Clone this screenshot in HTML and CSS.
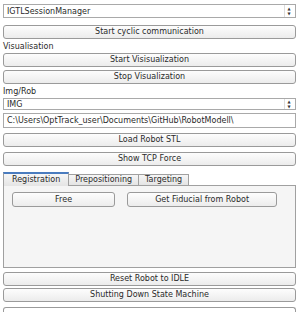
FILE: index.html
```html
<!DOCTYPE html>
<html lang="en">

<head>
    <meta charset="UTF-8">
    <title>Session Manager</title>
    <link rel="stylesheet" href="styles.css">
</head>

<body>
    <div class="panel">
        <div class="combo first">
            <span>IGTLSessionManager</span>
            <span class="spin">&#9650;<br>&#9660;</span>
        </div>
        <a class="btn gap7" href="javascript:;">Start cyclic communication</a>
        <div class="label">Visualisation</div>
        <a class="btn" href="javascript:;">Start Visisualization</a>
        <a class="btn gap3" href="javascript:;">Stop Visualization</a>
        <div class="label">Img/Rob</div>
        <div class="combo">
            <span>IMG</span>
            <span class="spin">&#9650;<br>&#9660;</span>
        </div>
        <div class="edit gap3">C:\Users\OptTrack_user\Documents\GitHub\RobotModell\</div>
        <a class="btn gap5" href="javascript:;">Load Robot STL</a>
        <a class="btn gap5" href="javascript:;">Show TCP Force</a>

        <div class="tabs">
            <div class="tab-bar">
                <span class="tab active">Registration</span>
                <span class="tab">Prepositioning</span>
                <span class="tab">Targeting</span>
            </div>
            <div class="tab-pane">
                <a class="btn free" href="javascript:;">Free</a>
                <a class="btn fiducial" href="javascript:;">Get Fiducial from Robot</a>
            </div>
        </div>

        <a class="btn gap4" href="javascript:;">Reset Robot to IDLE</a>
        <a class="btn gap2" href="javascript:;">Shutting Down State Machine</a>
        <div class="cut"></div>
    </div>
</body>

</html>
```

FILE: styles.css
```css
* {
    margin: 0;
    padding: 0;
    box-sizing: border-box;
}

body {
    background-color: #fff;
    font-family: "DejaVu Sans", "Liberation Sans", sans-serif;
    font-size: 8px;
    color: #2a2a2a;
}

a {
    text-decoration: none;
    color: #2a2a2a;
}

.panel {
    display: flex;
    flex-direction: column;
    padding: 0 4px 0 3px;
}

.combo {
    display: flex;
    justify-content: space-between;
    align-items: center;
    height: 12px;
    padding-left: 3px;
    border: 1px solid #a9a9a9;
    background-color: #fff;
}

.combo.first {
    margin-top: 4px;
    height: 14px;
}

.combo .spin {
    width: 9px;
    height: 100%;
    font-size: 4px;
    line-height: 5px;
    text-align: center;
    padding-top: 0;
    margin-right: 2px;
    border-left: 1px solid #ddd;
    color: #333;
}

.combo.first .spin {
    padding-top: 1px;
}

.btn {
    display: block;
    height: 14px;
    line-height: 12px;
    text-align: center;
    border: 1px solid #9a9a9a;
    border-radius: 3px;
    background: linear-gradient(#fdfdfd, #ececec);
}

.gap2 { margin-top: 2px; }
.gap3 { margin-top: 3px; }
.gap4 { margin-top: 4px; }
.gap5 { margin-top: 5px; }
.gap7 { margin-top: 7px; }

.label {
    height: 14px;
    line-height: 15px;
}

.edit {
    height: 15px;
    line-height: 13px;
    padding-left: 3px;
    border: 1px solid #a9a9a9;
    background-color: #fff;
    white-space: nowrap;
    overflow: hidden;
}

.tabs {
    margin-top: 6px;
}

.tab-bar {
    display: flex;
    align-items: flex-end;
    height: 13px;
}

.tab {
    height: 11px;
    line-height: 10px;
    padding: 0 6px;
    border: 1px solid #a0a0a0;
    border-bottom: none;
    background: linear-gradient(#f6f6f6, #e4e4e4);
    margin-left: -1px;
}

.tab.active {
    height: 14px;
    line-height: 12px;
    margin-left: 0;
    padding: 0 8px;
    background-color: #fafafa;
    border-top: 2px solid #4a7cbf;
    border-color: #a0a0a0;
    border-top-color: #4a7cbf;
    position: relative;
    z-index: 1;
    margin-bottom: -1px;
}

.tab-pane {
    display: flex;
    align-items: flex-start;
    height: 83px;
    padding: 6px 18px 0 8px;
    border: 1px solid #a0a0a0;
    background-color: #f5f5f5;
    gap: 12px;
}

.tab-pane .btn {
    height: 15px;
    line-height: 13px;
}

.free {
    width: 104px;
}

.fiducial {
    width: 151px;
}

.cut {
    margin-top: 5px;
    height: 6px;
    border-top: 1px solid #9a9a9a;
    border-left: 1px solid #9a9a9a;
    border-right: 1px solid #9a9a9a;
    border-radius: 3px 3px 0 0;
}
```
